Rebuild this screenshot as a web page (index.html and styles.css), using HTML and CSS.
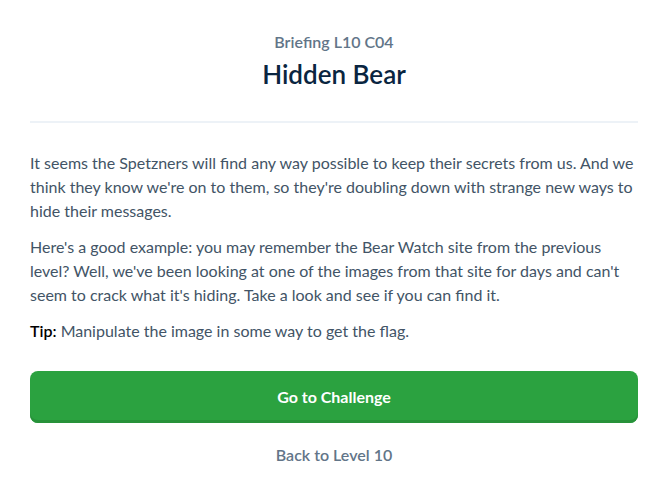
FILE: index.html
```html
<!DOCTYPE html>
<html lang="en">
<head>
<meta charset="utf-8">
<meta name="viewport" content="width=device-width, initial-scale=1">
<title>Hidden Bear</title>
<link rel="stylesheet" href="styles.css">
</head>
<body>
<main class="briefing">
  <header class="briefing-header">
    <p class="eyebrow">Briefing L10 C04</p>
    <h1 class="title">Hidden Bear</h1>
  </header>
  <section class="copy">
    <p>It seems the Spetzners will find any way possible to keep their secrets from us. And we think they know we're on to them, so they're doubling down with strange new ways to hide their messages.</p>
    <p>Here's a good example: you may remember the Bear Watch site from the previous level? Well, we've been looking at one of the images from that site for days and can't seem to crack what it's hiding. Take a look and see if you can find it.</p>
    <p><strong>Tip:</strong> Manipulate the image in some way to get the flag.</p>
  </section>
  <nav class="actions">
    <button class="primary" type="button">Go to Challenge</button>
    <a class="back" href="#">Back to Level 10</a>
  </nav>
</main>
</body>
</html>
```
FILE: styles.css
```css
* {
  box-sizing: border-box;
}

body {
  margin: 0;
  background: #fff;
  color: #425466;
  font: 16px/24px Lato, sans-serif;
}

.briefing {
  padding: 30px 21px 24px 30px;
}

.briefing-header {
  padding-bottom: 27px;
  border-bottom: 2px solid #edf2f7;
  text-align: center;
}

.eyebrow {
  margin: 0;
  color: #627588;
  font-weight: 600;
}

.title {
  margin: 0;
  color: #0a2540;
  font-size: 26px;
  font-weight: 600;
  line-height: 40px;
}

.copy {
  padding: 28px 0;
}

.copy p {
  margin: 0 0 12px;
}

.copy p:last-child {
  margin: 0;
}

.copy strong {
  color: #000;
  font-weight: 600;
}

.actions {
  display: flex;
  flex-direction: column;
  align-items: center;
  gap: 20px;
}

.primary {
  width: 100%;
  height: 52px;
  border: 0;
  border-radius: 8px;
  background: #2ba240;
  box-shadow: inset 0 -3px 0 #27923a;
  color: #fff;
  font: inherit;
  font-weight: 700;
}

.back {
  color: #627588;
  font-weight: 600;
  text-decoration: none;
}
```
